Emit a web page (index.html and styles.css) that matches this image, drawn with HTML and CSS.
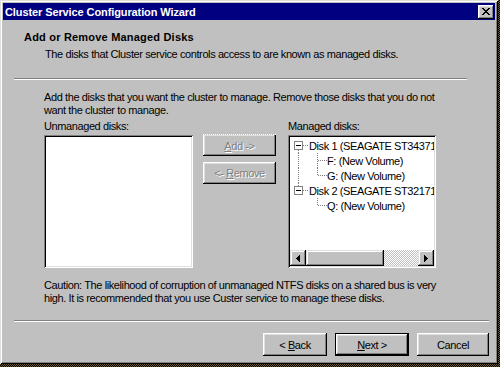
FILE: index.html
```html
<!DOCTYPE html>
<html lang="en">
<head>
    <meta charset="UTF-8">
    <title>Cluster Service Configuration Wizard</title>
    <link rel="stylesheet" href="styles.css">
</head>
<body>
    <div class="window">
        <div class="titlebar">
            <span class="caption">Cluster Service Configuration Wizard</span>
            <button class="close">
                <svg width="8" height="7" viewBox="0 0 8 7" shape-rendering="crispEdges"><path fill="#000" d="M0 0h2v1H0zM6 0h2v1H6zM1 1h2v1H1zM5 1h2v1H5zM2 2h4v1H2zM3 3h2v1H3zM2 4h4v1H2zM1 5h2v1H1zM5 5h2v1H5zM0 6h2v1H0zM6 6h2v1H6z"/></svg>
            </button>
        </div>

        <div class="header">
            <p class="head-title">Add or Remove Managed Disks</p>
            <p class="head-sub">The disks that Cluster service controls access to are known as managed disks.</p>
        </div>
        <div class="sep sep-top"></div>

        <div class="content">
            <p class="intro">Add the disks that you want the cluster to manage. Remove those disks that you do not<br>want the cluster to manage.</p>
            <div class="disks">
                <p class="lbl">Unmanaged disks:</p>
                <span></span>
                <p class="lbl">Managed disks:</p>

                <div class="listbox"></div>

                <div class="actions">
                    <button class="btn small disabled focus-top"><u>A</u>dd -&gt;</button>
                    <button class="btn small disabled">&lt;- <u>R</u>emove</button>
                </div>

                <div class="tree">
                    <div class="tree-items">
                        <div class="node">
                            <svg width="19" height="15" shape-rendering="crispEdges">
                                <rect x="4.5" y="3.5" width="8" height="8" fill="#fff" stroke="#808080"/>
                                <path d="M6 7.5h5" stroke="#000"/>
                                <path d="M13 7.5h6M8.5 12v3" stroke="#808080" stroke-dasharray="1 1"/>
                            </svg>
                            <span>Disk 1 (SEAGATE ST34371</span>
                        </div>
                        <div class="node">
                            <svg width="37" height="15" shape-rendering="crispEdges">
                                <path d="M8.5 0v15M27.5 0v15M28 7.5h9" stroke="#808080" stroke-dasharray="1 1"/>
                            </svg>
                            <span>F: (New Volume)</span>
                        </div>
                        <div class="node">
                            <svg width="37" height="15" shape-rendering="crispEdges">
                                <path d="M8.5 0v15M27.5 0v8M28 7.5h9" stroke="#808080" stroke-dasharray="1 1"/>
                            </svg>
                            <span>G: (New Volume)</span>
                        </div>
                        <div class="node">
                            <svg width="19" height="15" shape-rendering="crispEdges">
                                <path d="M8.5 0v3M13 7.5h6" stroke="#808080" stroke-dasharray="1 1"/>
                                <rect x="4.5" y="3.5" width="8" height="8" fill="#fff" stroke="#808080"/>
                                <path d="M6 7.5h5" stroke="#000"/>
                            </svg>
                            <span>Disk 2 (SEAGATE ST32171</span>
                        </div>
                        <div class="node">
                            <svg width="37" height="15" shape-rendering="crispEdges">
                                <path d="M27.5 0v8M28 7.5h9" stroke="#808080" stroke-dasharray="1 1"/>
                            </svg>
                            <span>Q: (New Volume)</span>
                        </div>
                    </div>
                    <div class="hscroll">
                        <div class="sb-btn">
                            <svg width="4" height="7" shape-rendering="crispEdges"><path fill="#000" d="M3 0h1v7H3zM2 1h1v5H2zM1 2h1v3H1zM0 3h1v1H0z"/></svg>
                        </div>
                        <div class="sb-thumb"></div>
                        <div class="sb-track"></div>
                        <div class="sb-btn">
                            <svg width="4" height="7" shape-rendering="crispEdges"><path fill="#000" d="M0 0h1v7H0zM1 1h1v5H1zM2 2h1v3H2zM3 3h1v1H3z"/></svg>
                        </div>
                    </div>
                </div>
            </div>
            <p class="caution">Caution: The likelihood of corruption of unmanaged NTFS disks on a shared bus is very<br>high. It is recommended that you use Custer service to manage these disks.</p>
        </div>

        <div class="sep sep-bottom"></div>
        <div class="footer">
            <button class="btn back">&lt; <u>B</u>ack</button>
            <button class="btn default"><u>N</u>ext &gt;</button>
            <button class="btn cancel">Cancel</button>
        </div>
    </div>
</body>
</html>
```

FILE: styles.css
```css
* {
    box-sizing: border-box;
}
body {
    margin: 0;
    width: 500px;
    height: 367px;
    overflow: hidden;
    background: repeating-conic-gradient(#000 0 25%, #6e5c28 0 50%) 0 0 / 2px 2px;
    font-family: "Liberation Sans", Arial, sans-serif;
    font-size: 11px;
    letter-spacing: -0.4px;
    color: #000;
}
p {
    margin: 0;
    line-height: 13px;
}
.window {
    width: 498px;
    height: 364px;
    padding: 3px;
    display: flex;
    flex-direction: column;
    background: #c0c0c0;
    box-shadow: inset 1px 1px #dfdfdf, inset -1px -1px #000, inset 2px 2px #fff, inset -2px -2px #808080;
}
.titlebar {
    height: 17px;
    display: flex;
    align-items: center;
    justify-content: space-between;
    padding: 0 1px 0 2px;
    background: #000080;
    color: #fff;
}
.caption {
    font-size: 11px;
    font-weight: bold;
    letter-spacing: -0.1px;
}
.close {
    width: 16px;
    height: 14px;
    padding: 0;
    border: 0;
    display: flex;
    align-items: center;
    justify-content: center;
    background: #c0c0c0;
    box-shadow: inset -1px -1px #000, inset 1px 1px #fff, inset -2px -2px #808080, inset 2px 2px #dfdfdf;
}
.header {
    padding-top: 11px;
}
.head-title {
    margin-left: 21px;
    font-weight: bold;
    letter-spacing: 0.2px;
}
.head-sub {
    margin: 4px 0 0 42px;
}
.sep {
    height: 2px;
    border-top: 1px solid #808080;
    border-bottom: 1px solid #fff;
}
.sep-top {
    width: 453px;
    margin: 17px 0 0 11px;
}
.sep-bottom {
    width: 475px;
    margin: 15px 0 0 11px;
}
.content {
    padding: 11px 0 0 41px;
}
.disks {
    display: grid;
    grid-template-columns: 149px 95px 148px;
    grid-template-rows: 13px 133px;
    row-gap: 2px;
    margin-top: 3px;
}
.listbox, .tree {
    background: #fff;
    box-shadow: inset 1px 1px #808080, inset -1px -1px #fff, inset 2px 2px #000, inset -2px -2px #dfdfdf;
}
.actions {
    display: flex;
    flex-direction: column;
    gap: 6px;
    padding-left: 10px;
    margin-top: -1px;
}
.btn {
    width: 72px;
    height: 23px;
    padding: 0;
    border: 0;
    background: #c0c0c0;
    font: inherit;
    letter-spacing: -0.4px;
    color: #000;
    box-shadow: inset -1px -1px #000, inset 1px 1px #fff, inset -2px -2px #808080, inset 2px 2px #dfdfdf;
}
.btn.small {
    width: 73px;
    height: 22px;
}
.btn.disabled {
    color: #808080;
    text-shadow: 1px 1px #fff;
}
.btn.focus-top {
    border-top: 1px dotted #fff;
    box-shadow: inset -1px -1px #000, inset 1px 0 #fff, inset -2px -2px #808080, inset 2px 1px #dfdfdf;
}
.btn.default {
    box-shadow: inset 0 0 0 1px #000, inset -2px -2px #000, inset 2px 2px #fff, inset -3px -3px #808080, inset 3px 3px #dfdfdf;
}
.tree {
    display: flex;
    flex-direction: column;
    padding: 2px;
}
.tree-items {
    flex: 1;
    padding-top: 1px;
    overflow: hidden;
}
.node {
    display: flex;
    align-items: center;
    height: 15px;
    white-space: nowrap;
}
.node svg {
    flex: none;
}
.hscroll {
    height: 16px;
    display: flex;
}
.sb-btn, .sb-thumb {
    background: #c0c0c0;
    box-shadow: inset -1px -1px #000, inset 1px 1px #dfdfdf, inset -2px -2px #808080, inset 2px 2px #fff;
}
.sb-btn {
    width: 16px;
    display: flex;
    align-items: center;
    justify-content: center;
}
.sb-thumb {
    width: 78px;
}
.sb-track {
    flex: 1;
    background: repeating-conic-gradient(#c0c0c0 0 25%, #fff 0 50%) 0 0 / 2px 2px;
}
.caution {
    margin-top: 11px;
}
.footer {
    display: flex;
    justify-content: flex-end;
    padding: 11px 6px 0 0;
}
.back {
    width: 64px;
    margin-right: 8px;
}
.default {
    width: 74px;
}
.cancel {
    margin-left: 8px;
}
```
